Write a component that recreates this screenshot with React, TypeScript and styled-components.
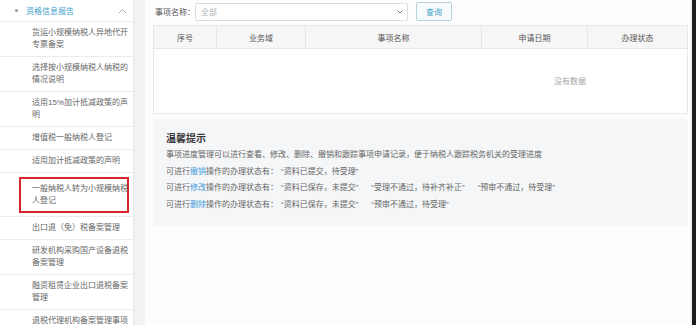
import styled, { createGlobalStyle } from 'styled-components';

const GlobalStyle = createGlobalStyle`
  body {
    margin: 0;
    background: #f1f2f4;
    font-family: "Liberation Sans", "Noto Sans CJK SC", sans-serif;
    text-spacing-trim: space-all;
  }
`;

const Page = styled.div`
  display: flex;
  height: 325px;
  overflow: hidden;
`;

const Sidebar = styled.div`
  width: 133px;
  flex-shrink: 0;
  background: #fff;
  border-right: 1px solid #e6e6e6;
`;

const SideHeader = styled.div`
  display: flex;
  align-items: center;
  height: 21px;
  padding: 0 6px 0 15px;
  border-bottom: 1px solid #ececec;
  font-size: 8px;
  color: #3e9ec9;
`;

const Bullet = styled.span`
  width: 3px;
  height: 3px;
  border-radius: 50%;
  background: #9a9a9a;
  margin-right: 8px;
`;

const SideTitle = styled.span`
  flex: 1;
`;

type SideItemProps = {
  $highlight?: boolean;
};

const SideItem = styled.div<SideItemProps>`
  padding: ${p => (p.$highlight ? '4px 0 3px 19px' : '5px 0 5px 32px')};
  border-bottom: 1px solid #ececec;
  font-size: 8px;
  line-height: 12px;
  color: #666;
`;

const ItemText = styled.div`
  width: 98px;
`;

const RedFrame = styled.div`
  width: 110px;
  box-sizing: border-box;
  border: 2px solid #d4252c;
  padding: 4px 0 4px 11px;
`;

const Main = styled.div`
  flex: 1;
  margin-left: 11px;
  background: #fdfdfd;
  padding: 2px 2px 0 8px;
`;

const FilterRow = styled.div`
  display: flex;
  align-items: center;
  height: 19px;
  padding-left: 2px;
  font-size: 8px;
  color: #555;
`;

const Label = styled.span`
  width: 40px;
`;

const Select = styled.div`
  display: flex;
  align-items: center;
  justify-content: space-between;
  width: 213px;
  height: 18px;
  box-sizing: border-box;
  border: 1px solid #dedede;
  border-radius: 2px;
  padding: 0 4px 0 5px;
  background: #fff;
  color: #b3b3b3;
`;

const QueryButton = styled.button`
  margin-left: 8px;
  width: 36px;
  height: 19px;
  border: 1px solid #b6d2dc;
  border-radius: 2px;
  background: #f8fbfc;
  color: #3e9ec9;
  font-family: inherit;
  font-size: 8px;
  padding: 0;
`;

const Table = styled.div`
  margin-top: 4px;
  border: 1px solid #e8e8e8;
  background: #fff;
`;

const HeadRow = styled.div`
  display: grid;
  grid-template-columns: 63px 89px 176px 106px 1fr;
  height: 22px;
  background: #f6f6f7;
  border-bottom: 1px solid #e8e8e8;
`;

const HeadCell = styled.div`
  display: flex;
  align-items: center;
  justify-content: center;
  border-right: 1px solid #e6e6e6;
  font-size: 8px;
  color: #555;
  &:last-child {
    border-right: none;
  }
`;

const EmptyBody = styled.div`
  display: flex;
  justify-content: flex-end;
  align-items: center;
  height: 62px;
  padding-bottom: 2px;
  padding-right: 101px;
  font-size: 8px;
  color: #a5a5a5;
`;

const TipBox = styled.div`
  margin-top: 5px;
  background: #f5f6f8;
  border-radius: 2px;
  padding: 11px 10px 13px 13px;
`;

const TipTitle = styled.div`
  font-size: 10px;
  line-height: 17px;
  font-weight: bold;
  color: #383838;
`;

const TipLine = styled.div`
  font-size: 8px;
  line-height: 16.5px;
  color: #666;
  white-space: nowrap;
`;

const Action = styled.span`
  color: #3d9bd8;
`;

const Quote = styled.span`
  margin-left: 3px;
  margin-right: 10px;
`;

const ScrollEdge = styled.div`
  width: 4px;
  margin-left: 2px;
  background: #1c1c1c;
`;

const items: { text: string; highlight?: boolean }[] = [
  { text: '货运小规模纳税人异地代开专票备案' },
  { text: '选择按小规模纳税人纳税的情况说明' },
  { text: '适用15%加计抵减政策的声明' },
  { text: '增值税一般纳税人登记' },
  { text: '适用加计抵减政策的声明' },
  { text: '一般纳税人转为小规模纳税人登记', highlight: true },
  { text: '出口退（免）税备案管理' },
  { text: '研发机构采购国产设备退税备案管理' },
  { text: '融资租赁企业出口退税备案管理' },
  { text: '退税代理机构备案管理事项' },
];

const columns = ['序号', '业务域', '事项名称', '申请日期', '办理状态'];

export default function App() {
  return (
    <>
      <GlobalStyle />
      <Page>
        <Sidebar>
          <SideHeader>
            <Bullet />
            <SideTitle>资格信息报告</SideTitle>
            <svg width="9" height="6" viewBox="0 0 9 6">
              <polyline points="1,5 4.5,1.5 8,5" fill="none" stroke="#9a9a9a" strokeWidth="0.9" />
            </svg>
          </SideHeader>
          {items.map(item => (
            <SideItem key={item.text} $highlight={item.highlight}>
              {item.highlight ? (
                <RedFrame>
                  <ItemText>{item.text}</ItemText>
                </RedFrame>
              ) : (
                <ItemText>{item.text}</ItemText>
              )}
            </SideItem>
          ))}
        </Sidebar>
        <Main>
          <FilterRow>
            <Label>事项名称：</Label>
            <Select>
              <span>全部</span>
              <svg width="6" height="4" viewBox="0 0 6 4">
                <polyline points="0.5,0.5 3,3 5.5,0.5" fill="none" stroke="#666" strokeWidth="0.9" />
              </svg>
            </Select>
            <QueryButton>查询</QueryButton>
          </FilterRow>
          <Table>
            <HeadRow>
              {columns.map(c => (
                <HeadCell key={c}>{c}</HeadCell>
              ))}
            </HeadRow>
            <EmptyBody>没有数据</EmptyBody>
          </Table>
          <TipBox>
            <TipTitle>温馨提示</TipTitle>
            <TipLine>事项进度管理可以进行查看、修改、删除、撤销和跟踪事项申请记录，便于纳税人跟踪税务机关的受理进度</TipLine>
            <TipLine>
              可进行<Action>撤销</Action>操作的办理状态有：<Quote>“资料已提交，待受理”</Quote>
            </TipLine>
            <TipLine>
              可进行<Action>修改</Action>操作的办理状态有：<Quote>“资料已保存，未提交”</Quote>
              <Quote>“受理不通过，待补齐补正”</Quote>
              <Quote>“预审不通过，待受理”</Quote>
            </TipLine>
            <TipLine>
              可进行<Action>删除</Action>操作的办理状态有：<Quote>“资料已保存，未提交”</Quote>
              <Quote>“预审不通过，待受理”</Quote>
            </TipLine>
          </TipBox>
        </Main>
        <ScrollEdge />
      </Page>
    </>
  );
}
